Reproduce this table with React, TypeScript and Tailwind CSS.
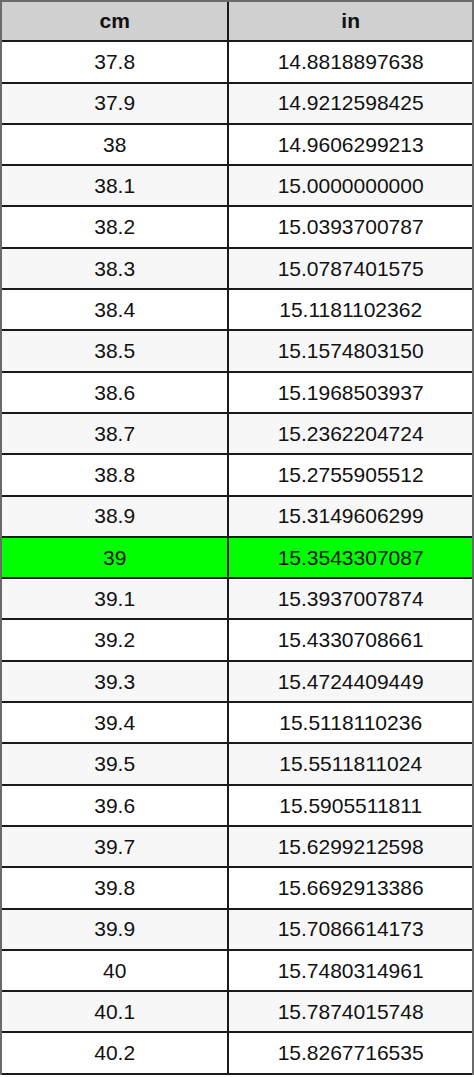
const rows: [string, string][] = [
  ["37.8", "14.8818897638"],
  ["37.9", "14.9212598425"],
  ["38", "14.9606299213"],
  ["38.1", "15.0000000000"],
  ["38.2", "15.0393700787"],
  ["38.3", "15.0787401575"],
  ["38.4", "15.1181102362"],
  ["38.5", "15.1574803150"],
  ["38.6", "15.1968503937"],
  ["38.7", "15.2362204724"],
  ["38.8", "15.2755905512"],
  ["38.9", "15.3149606299"],
  ["39", "15.3543307087"],
  ["39.1", "15.3937007874"],
  ["39.2", "15.4330708661"],
  ["39.3", "15.4724409449"],
  ["39.4", "15.5118110236"],
  ["39.5", "15.5511811024"],
  ["39.6", "15.5905511811"],
  ["39.7", "15.6299212598"],
  ["39.8", "15.6692913386"],
  ["39.9", "15.7086614173"],
  ["40", "15.7480314961"],
  ["40.1", "15.7874015748"],
  ["40.2", "15.8267716535"],
];

export default function App() {
  return (
    <div className="w-[474px] h-[1077px] bg-white font-['Liberation_Sans',Arial,sans-serif] text-[21px] text-[#111]">
      <div className="border-t-2 border-l-2 border-r-2 border-[#6a6a6a]">
        <div className="flex h-[40.3px] border-b-2 border-[#1a1a1a] bg-[#d0d0d0] font-bold">
          <div className="w-[227.3px] border-r-2 border-[#1a1a1a] flex items-center justify-center">cm</div>
          <div className="flex-1 flex items-center justify-center">in</div>
        </div>
        {rows.map(([cm, inch], i) => {
          const bg = cm === "39" ? "bg-[#00ff00]" : i % 2 === 0 ? "bg-white" : "bg-[#f7f7f7]";
          return (
            <div key={cm} className={`flex h-[41.3px] border-b-2 border-[#1a1a1a] ${bg}`}>
              <div className="w-[227.3px] border-r-2 border-[#1a1a1a] flex items-center justify-center">{cm}</div>
              <div className="flex-1 flex items-center justify-center">{inch}</div>
            </div>
          );
        })}
      </div>
    </div>
  );
}
